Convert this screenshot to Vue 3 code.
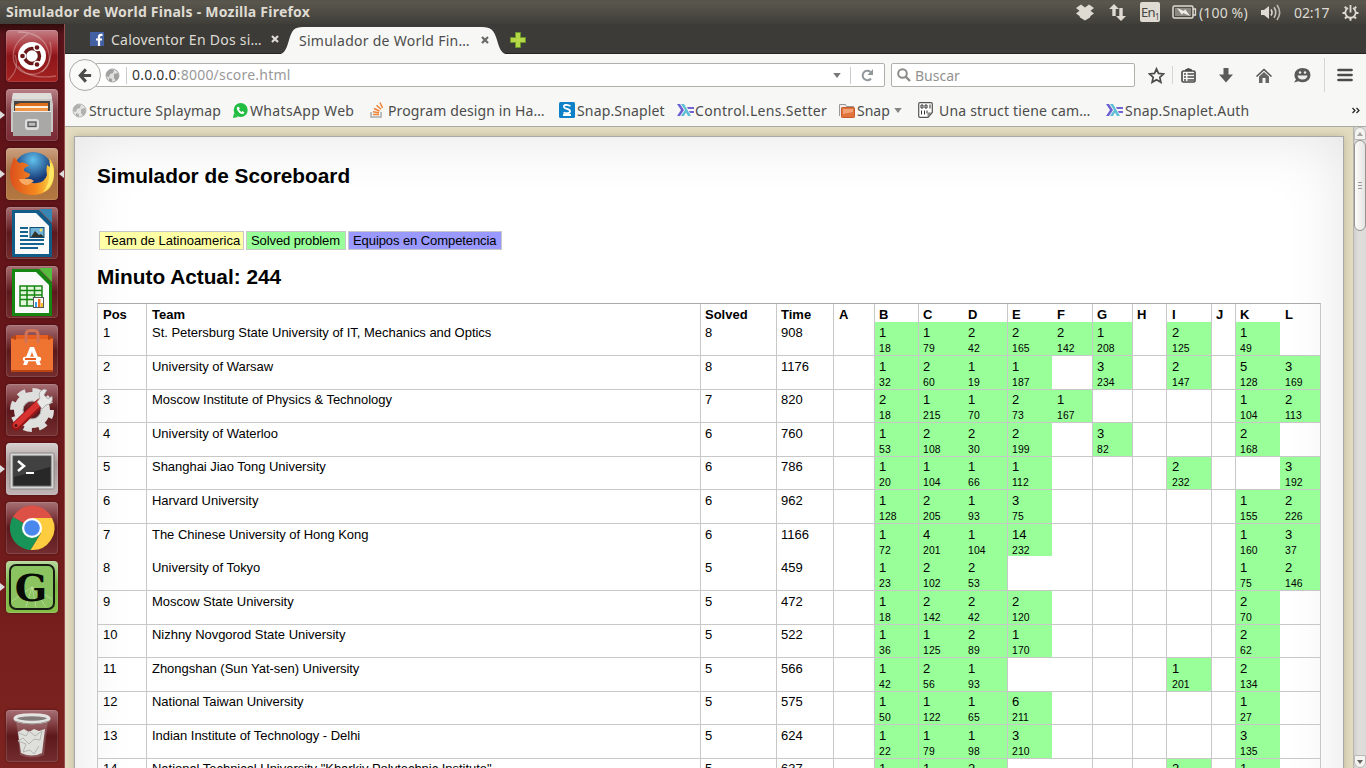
<script setup>
const columns = [
  { name: 'Pos', pad: 5 }, { name: 'Team', pad: 5 }, { name: 'Solved', pad: 4 },
  { name: 'Time', pad: 4 }, { name: 'A', pad: 5 }, { name: 'B', pad: 4 },
  { name: 'C', pad: 4 }, { name: 'D', pad: 5, open: true }, { name: 'E', pad: 4 },
  { name: 'F', pad: 5, open: true }, { name: 'G', pad: 4 }, { name: 'H', pad: 4 },
  { name: 'I', pad: 5 }, { name: 'J', pad: 4 }, { name: 'K', pad: 4 }, { name: 'L', pad: 5, open: true },
]
const letters = 'ABCDEFGHIJKL'.split('')

const teams = [
  ['St. Petersburg State University of IT, Mechanics and Optics', 8, 908, 'B1:18 C1:79 D2:42 E2:165 F2:142 G1:208 I2:125 K1:49'],
  ['University of Warsaw', 8, 1176, 'B1:32 C2:60 D1:19 E1:187 G3:234 I2:147 K5:128 L3:169'],
  ['Moscow Institute of Physics & Technology', 7, 820, 'B2:18 C1:215 D1:70 E2:73 F1:167 K1:104 L2:113'],
  ['University of Waterloo', 6, 760, 'B1:53 C2:108 D2:30 E2:199 G3:82 K2:168'],
  ['Shanghai Jiao Tong University', 6, 786, 'B1:20 C1:104 D1:66 E1:112 I2:232 L3:192'],
  ['Harvard University', 6, 962, 'B1:128 C2:205 D1:93 E3:75 K1:155 L2:226'],
  ['The Chinese University of Hong Kong', 6, 1166, 'B1:72 C4:201 D1:104 E14:232 K1:160 L3:37'],
  ['University of Tokyo', 5, 459, 'B1:23 C2:102 D2:53 K1:75 L2:146'],
  ['Moscow State University', 5, 472, 'B1:18 C2:142 D2:42 E2:120 K2:70'],
  ['Nizhny Novgorod State University', 5, 522, 'B1:36 C1:125 D2:89 E1:170 K2:62'],
  ['Zhongshan (Sun Yat-sen) University', 5, 566, 'B1:42 C2:56 D1:93 I1:201 K2:134'],
  ['National Taiwan University', 5, 575, 'B1:50 C1:122 D1:65 E6:211 K1:27'],
  ['Indian Institute of Technology - Delhi', 5, 624, 'B1:22 C1:79 D1:98 E3:210 K3:135'],
  ['National Technical University "Kharkiv Polytechnic Institute"', 5, 637, 'B1:61 C1:103 D2:88 I2:212 K1:93'],
].map(([name, solved, time, marks], i) => {
  const found = {}
  for (const mark of marks.split(' ')) {
    const [tries, minute] = mark.slice(1).split(':')
    found[mark[0]] = { tries, minute }
  }
  return { pos: i + 1, name, solved, time, problems: letters.map((l) => found[l] || null) }
})
</script>

<template>
  <div class="screen">
    <header class="panel">
      <span class="title">Simulador de World Finals - Mozilla Firefox</span>
      <div class="tray">
        <svg class="t-drop" width="18" height="17" viewBox="0 0 18 17"><path fill="#dfdbd2" d="M5 .5 9 3.500 13 .5 18 4 14.500 6.800 18 9.500 14.500 12 14 13.500 9 16.500 4 13.500 3.500 12 0 9.500 3.500 6.800 0 4Z"/></svg>
        <svg class="t-net" width="17" height="17" viewBox="0 0 17 17"><path fill="#dfdbd2" d="M5 0 10 5H6.700V12H3.300V5H0ZM12 17 7 12H10.300V4H13.700V12H17Z"/></svg>
        <span class="t-lang">En<small>1</small></span>
        <svg class="t-bat" width="25" height="14" viewBox="0 0 25 14"><rect x="1" y="1" width="20" height="12" rx="1.500" fill="none" stroke="#dfdbd2" stroke-width="1.500"/><rect x="3" y="3" width="16" height="8" fill="#8b8880"/><path d="M21 4h2.500v6H21" fill="none" stroke="#dfdbd2" stroke-width="1.300"/><path d="m5 3 7 3 1-2 5 7-7-3-1 2Z" fill="#efece5"/></svg>
        <span class="t-pct">(100 %)</span>
        <svg class="t-vol" width="21" height="17" viewBox="0 0 21 17"><path fill="#dfdbd2" d="M0 6h3l5-4v13l-5-4H0Z"/><g fill="none" stroke="#dfdbd2" stroke-width="1.600"><path d="M10 5.500q2 3 0 6"/><path d="M13 3.300q3.600 5.200 0 10.400" opacity=".85"/><path d="M16 1q5.400 7.500 0 15" opacity=".75"/></g></svg>
        <span class="t-clock">02:17</span>
        <svg class="t-gear" width="17" height="17" viewBox="0 0 17 17"><g fill="none" stroke="#dfdbd2"><path stroke-width="1.800" d="M6 4a5.200 5.200 0 1 0 5 0M8.500 1v7.500"/><path stroke-width="2" d="M4.600 4.600 2.800 2.800M12.400 4.600l1.800-1.800M3.300 9H.5M13.700 9h2.800M4.800 12.700l-1.800 1.800M12.200 12.700l1.800 1.800M8.500 14v2.700"/></g></svg>
      </div>
    </header>

    <div class="desktop">
      <aside class="launcher">
        <div class="tile dash">
          <svg viewBox="0 0 52 52"><g fill="none" stroke="#fff" stroke-opacity=".28" stroke-width="1.300"><path d="M12 2Q36 2 42 20T30 44Q14 46 8 32Q4 14 22 4"/><path d="M50 46Q22 50 12 36M2 50Q14 40 9 25M44 12Q48 30 36 42"/></g><circle cx="26" cy="26" r="14" fill="#fff"/><circle cx="26" cy="26" r="7.500" fill="none" stroke="#6a1717" stroke-width="3.500"/><g stroke="#fff" stroke-width="1.300" fill="#6a1717"><circle cx="16.500" cy="26" r="3"/><circle cx="31" cy="17.500" r="3"/><circle cx="31" cy="34.500" r="3"/></g></svg>
        </div>
        <div class="tile files running">
          <svg viewBox="0 0 52 52"><path d="M7 4h38l2 11v28H5V15Z" fill="#c8c8c6"/><path d="M7 4h38l1 6H6Z" fill="#deddda"/><path d="M8 12h36v11H8Z" fill="#454442"/><path d="M9 16l5-2h28v8H9Z" fill="#dd6e1e"/><path d="M9 17h33v2H9Z" fill="#fff0dc"/><path d="M9 19h33v3H9Z" fill="#f29445"/><path d="M7 22h38v25H7Z" fill="#a9a8a6"/><path d="M7 22h38v1H7Z" fill="#eee"/><rect x="19" y="30" width="14" height="11" rx="3" fill="#dedede"/><rect x="22" y="33" width="8" height="4.500" fill="#bbb" stroke="#555" stroke-width="1.300"/></svg>
        </div>
        <div class="tile firefox running active">
          <svg viewBox="0 0 52 52"><defs><radialGradient id="globe" cx=".5" cy=".2"><stop offset="0" stop-color="#62c1ed"/><stop offset="1" stop-color="#173a78"/></radialGradient><linearGradient id="fox" x1="0" x2="1"><stop offset="0" stop-color="#dc4f1c"/><stop offset=".6" stop-color="#f58a1f"/><stop offset="1" stop-color="#ffe04d"/></linearGradient></defs><circle cx="27" cy="24" r="20" fill="url(#globe)"/><path fill="url(#fox)" d="M6 15 8 9l5 6q6-2 10 3-6 1-5 5l6 3q0 4-5 4 3 6 12 5 8-1 10-8-1-6 0-10 4 2 5 5-1-7-3-12 6 6 5 18Q46 47 26 47 4 46 4 26q0-6 2-11Z"/><path fill="#ffe866" d="M43 25q2-7 0-13 6 8 4 20-3 9-10 12 7-8 6-19Z"/><path fill="#f9aa63" d="M18 31q7-1 10 2l-6 4q-7 0-9-6Z"/></svg>
        </div>
        <div class="tile doc">
          <svg viewBox="0 0 52 52"><path d="M6 3h27l13 14v33H6Z" fill="#115b89"/><path d="M33 2h13v14Z" fill="#3586b3"/><path d="M9 6h21l13 13v28H9Z" fill="#fafafa"/><path d="M14 21h8M14 25h8M14 29h8M14 33h24M14 37h24M14 41h18" stroke="#156391" stroke-width="2"/><rect x="24" y="20.500" width="14" height="10" fill="#6fb4d8" stroke="#114e78"/><path d="m25 30 4-6 4 4 2-1 3 3Z" fill="#30342c"/><circle cx="35" cy="23" r="1.500" fill="#f8da63"/></svg>
        </div>
        <div class="tile doc">
          <svg viewBox="0 0 52 52"><path d="M6 3h27l13 14v33H6Z" fill="#168612"/><path d="M33 2h13v14Z" fill="#55bd3e"/><path d="M9 6h21l13 13v28H9Z" fill="#fafafa"/><path d="M14 20h22v20H14Z" fill="#e2f7db"/><path d="M14 20h22v20H14ZM14 24.500h22M14 29h22M14 33.500h22M21 20v20M28.500 20v20" fill="none" stroke="#168612" stroke-width="1.500"/><rect x="27.500" y="31.500" width="10" height="10" fill="#fff" stroke="#555"/><path d="M29 36h2v5h-2Z" fill="#369ae4"/><path d="M32 33h2.500v8H32Z" fill="#ef7019"/><path d="M35 37h2v4h-2Z" fill="#f6bc23"/></svg>
        </div>
        <div class="tile bag">
          <svg viewBox="0 0 52 52"><path d="m5 13 5-3h32l5 3v34H5Z" fill="#e65e20"/><path d="M5 14h42v33H5Z" fill="#ef7432"/><path d="M5 45h42v2H5Z" fill="#ba4516"/><path d="m5 13 5-3v5ZM47 13l-5-3v5Z" fill="#b64513"/><path d="M20 18V10q0-4.500 4-4.500h4q4 0 4 4.500v8" fill="none" stroke="#d27353" stroke-width="3"/><path d="M24 22h4l7 18h-4l-5-13-5 13h-4Z" fill="#fff"/><path d="M19 34h14" stroke="#fff" stroke-width="4.500" stroke-linecap="round"/><path d="M19 34h11" stroke="#e65e20" stroke-width="2"/></svg>
        </div>
        <div class="tile settings">
          <svg viewBox="0 0 52 52"><circle cx="26" cy="26" r="19" fill="none" stroke="#ddd" stroke-width="6" stroke-dasharray="8 6.900"/><circle cx="26" cy="26" r="13.500" fill="none" stroke="#dfdfdd" stroke-width="9"/><circle cx="26" cy="26" r="9" fill="none" stroke="#aaa"/><path d="m10 42 24-23" stroke="#961616" stroke-width="9" stroke-linecap="round"/><path d="m10 41 24-23" stroke="#d73130" stroke-width="6" stroke-linecap="round"/><path d="m31 18 3-4q-3-6 4-9l3 1-3 5 4 4 4-3q2 8-6 9l-4 4Z" fill="#e8e8e7" stroke="#999" stroke-width=".7"/><circle cx="10" cy="41.500" r="1.500" fill="#4d1715"/></svg>
        </div>
        <div class="tile term running">
          <svg viewBox="0 0 52 52"><rect x="4" y="10" width="44" height="36" rx="1.500" fill="#d8d7d6" stroke="#888"/><rect x="7" y="13" width="38" height="30" fill="#282828" stroke="#666"/><path d="M8 14h36v10L8 34Z" fill="#414141"/><path d="m12 18 6 5-6 5" fill="none" stroke="#fff" stroke-width="2.500"/><path d="M20 30h8" stroke="#fff" stroke-width="2"/></svg>
        </div>
        <div class="tile chrome">
          <svg viewBox="0 0 52 52"><path d="M26 26 6.900 15A22 22 0 0 1 46 16H26Z" fill="#dc5046"/><path d="M26 26 6.900 15a22 22 0 0 0 17.700 33L35 31Z" fill="#199458"/><path d="M26 16h20A22 22 0 0 1 24.600 48L35 31Z" fill="#fdcd3f"/><circle cx="26" cy="26" r="10" fill="#fff"/><circle cx="26" cy="26" r="7.800" fill="#4b88ed"/></svg>
        </div>
        <div class="tile gold running">
          <svg viewBox="0 0 52 52"><rect x="4" y="4" width="44" height="44" rx="6" fill="#8bc360" stroke="#171c13" stroke-width="2"/><path d="M26 26 6 40M26 26l-6 20M26 26l4 20M26 26l14 20M26 26l20 12" stroke="#d4efbb" stroke-opacity=".5"/><text x="25" y="40" text-anchor="middle" class="gletter">G</text></svg>
        </div>
        <div class="tile trash">
          <svg viewBox="0 0 52 52"><path d="m10 10 4 35q12 5 24 0l4-35Z" fill="#fff" opacity=".18"/><path d="m12 22 6-3 5 3 5-3 5 2 6-2-3 24q-10 5-21 0Z" fill="#dfdfdc"/><path d="m13 23 7 3 3-5 6 5 7-5-2 9-6-1-5 5-6-6-5 3 8 3-3 8 7-2 4 4 5-8" fill="none" stroke="#b5b5b2" stroke-width="1"/><ellipse cx="26" cy="8.500" rx="17" ry="3.800" fill="#827b79" stroke="#e4e3e1" stroke-width="3"/><path d="M9 11q17 6 34 0" fill="none" stroke="#999" stroke-width="1"/></svg>
        </div>
      </aside>

      <main class="browser">
        <div class="tabs">
          <div class="tab">
            <svg width="14" height="14" viewBox="0 0 14 14"><path fill="#4460a4" d="M0 0h14v14H0Z"/><path fill="none" stroke="#fff" stroke-width="2.200" d="M12.500 2.800h-1.300Q9 2.800 9 5v9M6 7.500h6"/></svg>
            <span class="first-label">Caloventor En Dos si…</span>
            <svg class="close" width="8" height="8" viewBox="0 0 8 8"><path d="m1 1 6 6M7 1 1 7" stroke="#dedbd5" stroke-width="2.200"/></svg>
          </div>
          <div class="tab current">
            <svg class="shape" width="240" height="28" viewBox="0 0 240 28"><path fill="#f7f7f5" d="M0 28C10 28 12 24 15 13 18 3 20 0 29 0H208C217 0 220 3 223 13 226 24 228 28 238 28Z"/></svg>
            <span class="second-label">Simulador de World Fin…</span>
            <svg class="close" width="8" height="8" viewBox="0 0 8 8"><path d="m1 1 6 6M7 1 1 7" stroke="#686865" stroke-width="2.200"/></svg>
          </div>
          <svg class="plus" width="16" height="16" viewBox="0 0 16 16"><path d="M5.500.5h5v5h5v5h-5v5h-5v-5h-5v-5h5Z" fill="#b5d748" stroke="#6b9728"/></svg>
        </div>

        <div class="navbar">
          <div class="back"><svg width="16" height="16" viewBox="0 0 16 16"><path d="M9 1 2.500 8 9 15M3 8h12" fill="none" stroke="#4d4d4b" stroke-width="3.400"/></svg></div>
          <div class="url">
            <svg class="globe" width="15" height="15" viewBox="0 0 15 15"><circle cx="7.500" cy="7.500" r="6.500" fill="#dededc" stroke="#aaa"/><path fill="#a0a09e" d="m2 4 4-3 3 1-1 3-3 1-1 3-3-1Zm7 2 4-1 1 4-3 4-2-3Zm-5 4 3 1v3l-3-1Z"/></svg>
            <span class="address"><b>0.0.0.0</b>:8000/score.html</span>
            <svg class="drop" width="8" height="5" viewBox="0 0 9 6"><path fill="#777" d="M0 0h9L4.500 6Z"/></svg>
            <svg class="reload" width="13" height="13" viewBox="0 0 13 13"><path d="M10 9.500A4.700 4.700 0 1 1 9.500 3" fill="none" stroke="#8f979b" stroke-width="2"/><path d="M12 0v6H6.500Z" fill="#8f979b"/></svg>
          </div>
          <div class="search">
            <svg width="14" height="14" viewBox="0 0 14 14"><circle cx="5.500" cy="5.500" r="4.300" fill="none" stroke="#8b8b88" stroke-width="2"/><path d="m8.500 8.500 4.500 4.500" stroke="#8b8b88" stroke-width="2.400"/></svg>
            <span>Buscar</span>
          </div>
          <svg class="star" width="17" height="17" viewBox="0 0 17 17"><path d="m8.500 1.800 2 4.600 5.100.5-3.800 3.400 1.100 5-4.400-2.600-4.400 2.600 1.100-5L1.400 6.900l5.100-.5Z" fill="none" stroke="#4c4c4a" stroke-width="1.700"/></svg>
          <i class="rule short"></i>
          <svg class="clip" width="15" height="15" viewBox="0 0 15 15"><rect x="1" y="3" width="13" height="11" rx="1.500" fill="none" stroke="#4c4c4a" stroke-width="1.700"/><path d="M4 3V1.500L7.500 0 11 1.500V3Z" fill="#4c4c4a"/><path d="M3 6h2m1.500 0H13M3 9h2m1.500 0H13M3 12h2m1.500 0H13" stroke="#4c4c4a" stroke-width="1.300"/></svg>
          <svg class="down" width="14" height="15" viewBox="0 0 14 15"><path d="M4.500 0h5v6.500H14L7 14.500 0 6.500h4.500Z" fill="#5b5b59"/></svg>
          <svg class="home" width="16" height="15" viewBox="0 0 16 15"><path d="m0 8 8-7.500L16 8l-1 1-7-6.500L1 9Z" fill="#4d4d4b"/><path d="m3 8.500 5-4.500 5 4.500V15h-3.500v-5h-3v5H3Z" fill="#666"/></svg>
          <svg class="chat" width="17" height="15" viewBox="0 0 17 15"><path d="M8.500 0Q16 0 16.500 7q-.5 7-8 7.300-2 0-4-1L0 14.500l2-3Q0 9 .5 6.500 1.500 0 8.500 0Z" fill="#5a5a58"/><path d="M3.500 7.500h10q-.5 4-5 4t-5-4Z" fill="#eee"/><circle cx="6" cy="4.500" r="1.200" fill="#eee"/><circle cx="11" cy="4.500" r="1.200" fill="#eee"/></svg>
          <i class="rule tall"></i>
          <svg class="burger" width="16" height="14" viewBox="0 0 16 14"><path d="M1.500 2h13M1.500 7h13M1.500 12h13" stroke="#4b4b49" stroke-width="2.700" stroke-linecap="round"/></svg>
        </div>

        <nav class="bookmarks">
          <div class="mark m1"><svg width="15" height="15" viewBox="0 0 15 15"><circle cx="7.500" cy="7.500" r="6.500" fill="#e5e5e4" stroke="#b8b8b7"/><path fill="#b1b1b0" d="m2 4 4-3 3 1-1 3-3 1-1 3-3-1Zm7 2 4-1 1 4-3 4-2-3Zm-5 4 3 1v3l-3-1Z"/></svg><span>Structure Splaymap</span></div>
          <div class="mark m2"><svg width="15" height="15" viewBox="0 0 15 15"><circle cx="7.700" cy="7" r="7" fill="#21bd42"/><path d="m0 15 1-5 4 4Z" fill="#21bd42"/><path d="M5 3.500q-2 1-.5 4Q6 10 8.500 11q2 .5 3-1.500L9.500 8l-1 1Q6.500 8 6 6.200l1-1Z" fill="#fff"/></svg><span>WhatsApp Web</span></div>
          <div class="mark m3"><svg width="14" height="16" viewBox="0 0 14 16"><path d="M1 10v5h10v-5" fill="none" stroke="#aaa" stroke-width="1.500"/><path d="M3 12.500h6M3 9.800l6 1M4 6.500l5.500 2.500M6.500 3.300l4.500 4M10 .5l2.500 5.500" stroke="#ef8235" stroke-width="1.500"/></svg><span>Program design in Ha…</span></div>
          <div class="mark m4"><svg width="16" height="16" viewBox="0 0 16 16"><rect width="16" height="16" rx="1.500" fill="#0e81c7"/><path d="M11.500 4Q4.500 1.500 5 5c.5 2.500 6 1.500 6 4.200s-4.500 2.300-6.500 1.300M4 13h8" fill="none" stroke="#fff" stroke-width="1.800"/></svg><span>Snap.Snaplet</span></div>
          <div class="mark m5"><svg width="17" height="12" viewBox="0 0 17 12"><path d="M0 0h3l4 6-4 6H0l4-6Z" fill="#6b60d3"/><path d="M4 0h3l7 12h-3L9 8.500 7 12H4l4-6Z" fill="#5cbfd5"/><path d="M10 3h7v2h-6ZM12 7h5v2h-4Z" fill="#7165d6"/></svg><span>Control.Lens.Setter</span></div>
          <div class="mark m6"><svg width="16" height="15" viewBox="0 0 16 15"><path d="M.5 13V1.500h6l1 2h7V6" fill="#eee" stroke="#999"/><rect x="2.500" y="4.500" width="13" height="10" rx=".8" fill="#e0743c" stroke="#c7592a"/><path d="M4 6h10v3L4 11Z" fill="#f2a274"/></svg><span>Snap</span><svg class="caret" width="8" height="5" viewBox="0 0 9 6"><path fill="#858582" d="M0 0h9L4.500 6Z"/></svg></div>
          <div class="mark m7"><svg width="15" height="16" viewBox="0 0 15 16"><path d="M2 .7h11q1.300 0 1.300 1.300v8.500L10 15.300H2Q.7 15.300.7 14V2Q.7.700 2 .7Z" fill="#fff" stroke="#555" stroke-width="1.200"/><path d="M3 3h2v3H3ZM7 3h2v3H7ZM12 2.500v4M3.500 8.500v4M6.500 8.500v4M9 8.500v3" fill="none" stroke="#333"/><path d="M9.500 15v-4.500H14Z" fill="#888"/></svg><span>Una struct tiene cam…</span></div>
          <div class="mark m8"><svg width="17" height="12" viewBox="0 0 17 12"><path d="M0 0h3l4 6-4 6H0l4-6Z" fill="#6b60d3"/><path d="M4 0h3l7 12h-3L9 8.500 7 12H4l4-6Z" fill="#5cbfd5"/><path d="M10 3h7v2h-6ZM12 7h5v2h-4Z" fill="#7165d6"/></svg><span>Snap.Snaplet.Auth</span></div>
          <svg class="more" width="8" height="7" viewBox="0 0 8 7"><path d="m.5 1 2.500 2.500L.5 6M4.500 1 7 3.500 4.500 6" fill="none" stroke="#222" stroke-width="1.200"/></svg>
        </nav>

        <div class="viewport">
          <section class="page">
            <h1>Simulador de Scoreboard</h1>
            <div class="legend">
              <span class="latin">Team de Latinoamerica</span>
              <span class="solved">Solved problem</span>
              <span class="rivals">Equipos en Competencia</span>
            </div>
            <h2>Minuto Actual: 244</h2>
            <div class="board">
              <div class="row head">
                <div v-for="c in columns" :key="c.name" class="cell" :class="{ open: c.open }" :style="{ paddingLeft: c.pad + 'px' }">{{ c.name }}</div>
              </div>
              <div v-for="t in teams" :key="t.pos" class="row" :class="{ joined: t.pos === 1 || t.pos === 8 }">
                <div class="cell" :style="{ paddingLeft: columns[0].pad + 'px' }">{{ t.pos }}</div>
                <div class="cell name" :style="{ paddingLeft: columns[1].pad + 'px' }">{{ t.name }}</div>
                <div class="cell" :style="{ paddingLeft: columns[2].pad + 'px' }">{{ t.solved }}</div>
                <div class="cell" :style="{ paddingLeft: columns[3].pad + 'px' }">{{ t.time }}</div>
                <div v-for="(p, i) in t.problems" :key="i" class="cell" :class="{ ok: p, open: columns[i + 4].open }" :style="{ paddingLeft: columns[i + 4].pad + 'px' }">
                  <template v-if="p">{{ p.tries }}<small>{{ p.minute }}</small></template>
                </div>
              </div>
            </div>
          </section>
          <div class="scroll">
            <div class="knob up"><svg width="6" height="4" viewBox="0 0 6 4"><path d="M0 4 3 0l3 4Z" fill="#a5a5a2"/></svg></div>
            <div class="thumb"><i></i><i></i><i></i></div>
            <div class="knob bottom"><svg width="6" height="4" viewBox="0 0 6 4"><path d="M0 0h6L3 4Z" fill="#62625f"/></svg></div>
          </div>
        </div>
      </main>
    </div>
  </div>
</template>

<style>
body { margin: 0; overflow: hidden; }
</style>

<style scoped>
* { box-sizing: border-box; }
svg { display: block; flex: none; }
.screen { width: 1366px; height: 768px; overflow: hidden; display: flex; flex-direction: column; font: 14px "Noto Sans", "Open Sans", sans-serif; color: #4c4c4c; white-space: nowrap; }
.panel { height: 24px; flex: none; display: flex; justify-content: space-between; align-items: center; padding: 0 7px 0 6px; background: linear-gradient(#55524a, #5a574e 8%, #3f3e39); color: #dfdbd2; }
.title { font-size: 14px; font-weight: 700; letter-spacing: .23px; margin-top: -2px; }
.tray { display: flex; align-items: center; height: 24px; }
.t-net { margin-left: 15px; }
.t-lang { margin-left: 14px; width: 20px; height: 20px; border-radius: 2px; background: #dfdbd2; color: #45443f; font-size: 13px; line-height: 20px; padding-left: 1px; letter-spacing: -.7px; }
.t-lang small { font-size: 8px; position: relative; top: 3px; }
.t-bat { margin-left: 12px; }
.t-pct { width: 51px; margin-left: 2px; letter-spacing: .15px; }
.t-vol { margin-left: 11px; }
.t-clock { width: 37px; margin-left: 12px; letter-spacing: -.1px; }
.t-gear { margin-left: 11px; }

.desktop { flex: 1; min-height: 0; display: flex; }
.launcher { width: 65px; flex: none; padding: 6px 0 6px 6px; display: flex; flex-direction: column; gap: 7px; background: linear-gradient(#310b0b, #57141a 10px, #5d1319 40px, #681719 50%, #7e2420); border-right: 1px solid #955052; }
.tile { position: relative; width: 52px; height: 52px; flex: none; border-radius: 4px; background: linear-gradient(#a77074, #753034 35%, #5c181c 50%, #732d2f); box-shadow: inset 0 0 0 1px rgba(255,255,255,.12), 0 0 3px rgba(0,0,0,.4); }
.tile svg { width: 52px; height: 52px; }
.tile.running::before { content: ""; position: absolute; left: -6px; top: 22px; border: 4px solid transparent; border-left: 5px solid #ddd; border-right: 0; }
.tile.active::after { content: ""; position: absolute; right: -6px; top: 22px; border: 4px solid transparent; border-right: 5px solid #ddd; border-left: 0; }
.dash { background: linear-gradient(#c28086, #a93035 35%, #8c1519 50%, #a52220); }
.files { background: linear-gradient(#b98187, #874048 40%, #7a2b35); }
.firefox { background: linear-gradient(#cca281, #a66d42 45%, #b4783f); }
.term { background: linear-gradient(#d8d1d1, #a99a9b 40%, #c1b4b5); }
.gold { background: linear-gradient(#b7d79c, #79b745 45%, #85bd46); }
.gletter { font: 700 38px "DejaVu Serif", serif; fill: #090b07; }
.trash { margin-top: auto; }

.browser { flex: 1; min-width: 0; display: flex; flex-direction: column; background: #f7f7f5; }
.tabs { height: 30px; flex: none; display: flex; align-items: flex-end; background: #3c3b37; border-bottom: 1px solid #242321; padding-left: 25px; }
.tab { height: 28px; width: 191px; display: flex; align-items: center; color: #dedbd5; position: relative; }
.first-label { width: 150px; margin-left: 7px; letter-spacing: .25px; }
.close { margin-left: 10px; }
.tab.current { width: 222px; color: #4c4c4c; padding-left: 18px; margin-bottom: -1px; height: 28px; }
.shape { position: absolute; left: -7px; top: 1px; }
.second-label { position: relative; width: 172px; letter-spacing: .27px; }
.current .close { position: relative; }
.plus { margin-left: 7px; margin-bottom: 5px; position: relative; }
.navbar { height: 42px; flex: none; display: flex; align-items: center; padding: 0 13px 0 4px; }
.back { width: 32px; height: 32px; border: 1px solid #aaa9a5; border-radius: 50%; background: #fafaf9; display: flex; align-items: center; justify-content: center; z-index: 1; flex: none; }
.back svg { width: 14px; height: 15px; }
.url { width: 789px; height: 24px; margin-left: -5px; border: 1px solid #b0afab; border-radius: 0 2px 2px 0; background: #fff; display: flex; align-items: center; padding-left: 8px; }
.address { height: 17px; line-height: 16px; border-left: 1px solid #ccc; margin-left: 6px; padding-left: 5px; color: #999; width: 702px; letter-spacing: .21px; }
.address b { font-weight: 400; color: #333; }
.drop { margin-left: 5px; }
.reload { margin-left: 9px; box-sizing: content-box; border-left: 1px solid #ccc; padding: 2px 0 2px 10px; }
.search { width: 244px; height: 24px; margin-left: 6px; border: 1px solid #b0afab; border-radius: 2px; background: #fff; display: flex; align-items: center; padding-left: 5px; gap: 4px; color: #929290; }
.star { margin-left: 13px; }
.rule { width: 1px; background: #d5d5d2; }
.short { height: 18px; margin-left: 7px; }
.tall { height: 34px; margin-left: 13px; }
.clip { margin-left: 8px; }
.down { margin-left: 23px; }
.home { margin-left: 23px; }
.chat { margin-left: 22px; }
.burger { margin-left: auto; }
.bookmarks { height: 31px; flex: none; position: relative; border-bottom: 1px solid #aaa9a5; display: flex; align-items: center; padding: 0 6px 2px 7px; }
.mark { display: flex; align-items: center; gap: 2px; flex: none; }
.m1 { width: 161px; letter-spacing: .17px; }
.m2 { width: 137px; letter-spacing: .33px; }
.m3 { width: 189px; gap: 4px; letter-spacing: .13px; }
.m4 { width: 118px; letter-spacing: .15px; }
.m5 { width: 162px; gap: 1px; letter-spacing: .32px; }
.m6 { width: 79px; letter-spacing: 0; }
.m6 .caret { margin-left: 2px; }
.m7 { width: 188px; gap: 6px; letter-spacing: .19px; }
.m8 { gap: 2px; letter-spacing: .2px; }
.more { margin-left: auto; }

.viewport { flex: 1; min-height: 0; display: flex; background: #e3dcc0; }
.page { width: 1270px; height: 700px; margin: 9px 9px 0 9px; flex: none; border: 1px solid #a8a8a8; background: #fff; box-shadow: 0 0 8px rgba(0,0,0,.18), inset 0 0 60px rgba(0,0,0,.11); padding: 0 22px; font: 13px "Liberation Sans", Arial, sans-serif; color: #000; }
h1, h2 { font-size: 20.8px; line-height: 24px; font-weight: 700; margin: 0; }
h1 { margin-top: 27px; }
.legend { display: flex; gap: 2px; margin: 43px 0 0 2px; }
.legend span { height: 19px; border: 1px solid #c8c8c8; line-height: 18px; padding-left: 5px; letter-spacing: -.06px; }
.legend .latin { width: 145px; background: #ffffa5; letter-spacing: 0; }
.legend .solved { width: 100px; background: #99ff99; padding-left: 4px; letter-spacing: -.1px; }
.legend .rivals { width: 154px; background: #9999ff; padding-left: 4px; letter-spacing: -.08px; }
h2 { margin-top: 15px; }
.board { width: 1224px; margin-top: 14px; border-top: 1px solid #aaa; border-right: 1px solid #c8c8c8; }
.row { display: grid; grid-template-columns: 49px 554px 76px 57px 41px 44px 45px 44px 45px 40px 40px 34px 45px 24px 45px 40px; height: 33.57px; }
.row.head { height: 17.5px; font-weight: 700; }
.cell { border-left: 1px solid #c8c8c8; border-top: 1px solid #c8c8c8; padding-top: 1.65px; line-height: 17px; overflow: hidden; }
.cell.name { letter-spacing: -.03px; }
.joined .cell { border-top: 0; padding-top: 2.65px; }
.head .cell { padding-top: 1px; border-top: 0; line-height: 19px; }
.cell.open { border-left: 0; }
.cell.ok { background: #99ff99; }
.cell small { display: block; font-size: 10.4px; line-height: 16px; letter-spacing: .1px; }

.scroll { width: 13px; margin-left: auto; flex: none; display: flex; flex-direction: column; background: linear-gradient(90deg, #d0cfcc, #dfdedc 40%, #dcdbd8); border-left: 1px solid #b5b4b0; }
.knob { height: 13px; display: flex; align-items: center; justify-content: center; border: 1px solid #bab9b6; border-radius: 6px 6px 0 0; background: #f3f3f2; }
.knob.bottom { margin-top: auto; border-radius: 0 0 6px 6px; }
.thumb { height: 91px; border: 1px solid #969590; border-radius: 6px; background: linear-gradient(90deg, #fcfcfb, #e5e4e1); display: flex; flex-direction: column; align-items: center; justify-content: center; gap: 2px; }
.thumb i { width: 4px; height: 1px; background: #999; }
</style>
